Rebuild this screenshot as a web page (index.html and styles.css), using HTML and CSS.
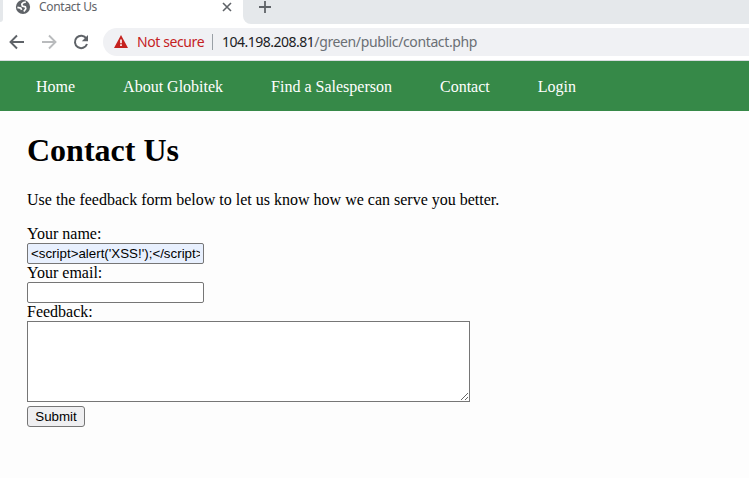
FILE: index.html
```html
<!DOCTYPE html>
<html lang="en">
<head>
<meta charset="utf-8">
<title>Contact Us</title>
<link rel="stylesheet" href="styles.css">
</head>
<body>
<header class="browser">
  <div class="tabs">
    <div class="previous-tab"></div>
    <div class="tab">
      <svg class="globe" width="16" height="16" viewBox="0 0 16 16"><circle cx="8" cy="8" r="7.1" fill="#5f6368"/><path d="M10.8 3.2 8.4 3.5 6.8 5.2 7.4 7.2 10.4 7.8 10.8 9.8 8.8 12.4M2.4 8.4l3.4.8.8 1.6" fill="none" stroke="#fff" stroke-width="1.7" stroke-linejoin="round"/></svg>
      <span class="tab-title">Contact Us</span>
      <svg class="close" width="10" height="10" viewBox="0 0 10 10"><path d="m1 1 8 8M9 1 1 9" stroke="#5f6368" stroke-width="1.6"/></svg>
    </div>
    <div class="strip"><svg width="12" height="12" viewBox="0 0 12 12"><path d="M6 0v12M0 6h12" stroke="#5f6368" stroke-width="1.8"/></svg></div>
  </div>
  <div class="toolbar">
    <svg class="tool" width="16" height="16" viewBox="0 0 16 16"><path d="M15 8H2M8 1.5 1.5 8 8 14.5" fill="none" stroke="#5f6368" stroke-width="1.9"/></svg>
    <svg class="tool" width="16" height="16" viewBox="0 0 16 16"><path d="M1 8h13M8 1.5 14.5 8 8 14.5" fill="none" stroke="#b9bbbd" stroke-width="1.9"/></svg>
    <svg class="tool" width="16" height="16" viewBox="0 0 16 16"><path d="M13.4 4.6A6.2 6.2 0 1 0 14 10" fill="none" stroke="#5f6368" stroke-width="2"/><path d="M15 1v6.2H8.8z" fill="#5f6368"/></svg>
    <div class="address">
      <svg width="14" height="13" viewBox="0 0 14 13"><path d="M7 0 14 13H0z" fill="#c5221f"/><path d="M7 4.5v3.8M7 9.3v1.7" stroke="#fff" stroke-width="1.6"/></svg>
      <span class="warning">Not secure</span>
      <span class="divider"></span>
      <span class="url"><span class="host">104.198.208.81</span>/green/public/contact.php</span>
    </div>
  </div>
</header>
<nav><a>Home</a><a>About Globitek</a><a>Find a Salesperson</a><a>Contact</a><a>Login</a></nav>
<main>
  <h1>Contact Us</h1>
  <p>Use the feedback form below to let us know how we can serve you better.</p>
  <form>
    <label for="name">Your name:</label>
    <input class="filled" id="name" type="text" value="&lt;script&gt;alert('XSS!');&lt;/script&gt;">
    <label for="email">Your email:</label>
    <input id="email" type="text">
    <label for="feedback">Feedback:</label>
    <textarea id="feedback"></textarea>
    <button type="button">Submit</button>
  </form>
</main>
</body>
</html>
```
FILE: styles.css
```css
* { box-sizing: border-box; }
body { margin: 0; height: 478px; overflow: hidden; background: #fdfdfd; color: #000; font: 16px "Liberation Serif", serif; }
svg { display: block; flex: none; }
.browser { font-family: "Noto Sans", sans-serif; }
.tabs { height: 24px; display: flex; background: #fff; }
.previous-tab { width: 3px; height: 22px; background: #e5e8eb; border-bottom-right-radius: 4px; }
.tab { width: 240px; height: 24px; padding: 0 11px 10px 12px; display: flex; align-items: center; background: #fff; }
.tab-title { margin-left: 8px; flex: 1; font-size: 12px; letter-spacing: -0.3px; line-height: 16px; color: #5f6368; }
.strip { flex: 1; background: #e5e8eb; border-bottom-left-radius: 8px; padding: 1px 0 0 16px; }
.toolbar { height: 37px; display: flex; align-items: center; padding: 0 0 1px 9px; background: #fff; border-bottom: 1px solid #d9dce0; }
.tool { margin-right: 16px; }
.address { flex: 1; height: 28px; margin-left: -2px; padding-left: 11px; display: flex; align-items: center; border-radius: 14px 0 0 14px; background: #f0f1f4; font-size: 14px; white-space: nowrap; }
.warning { width: 67px; margin-left: 9px; color: #c5221f; letter-spacing: -0.4px; }
.divider { width: 1px; height: 16px; margin: 0 9px 0 8px; background: #9aa0a6; }
.url { color: #6b6f74; letter-spacing: -0.38px; }
.host { color: #202124; letter-spacing: -0.5px; }
nav { height: 50px; padding: 2px 0 0 36px; display: flex; align-items: center; gap: 48px; background: #368948; color: #fff; }
main { padding: 21px 27px 0; }
h1 { margin: 0; font-size: 32px; line-height: 37px; }
p { margin: 22px 0 16px; line-height: 18px; }
form { display: flex; flex-direction: column; align-items: flex-start; }
label { height: 18px; line-height: 18px; }
input, textarea { width: 177px; height: 21px; margin: 0; padding: 1px 3px; border: 1px solid #767676; border-radius: 2px; background: #fff; color: #000; font: 13.333px "Liberation Sans", sans-serif; }
.filled { background: #e8f0fe; }
textarea { width: 443px; height: 81px; border-radius: 0; }
button { width: 58px; height: 21px; margin: 4px 0 0; padding: 0; border: 1px solid #767676; border-radius: 3px; background: #efeff1; color: #000; font: 13.333px "Liberation Sans", sans-serif; }
```
